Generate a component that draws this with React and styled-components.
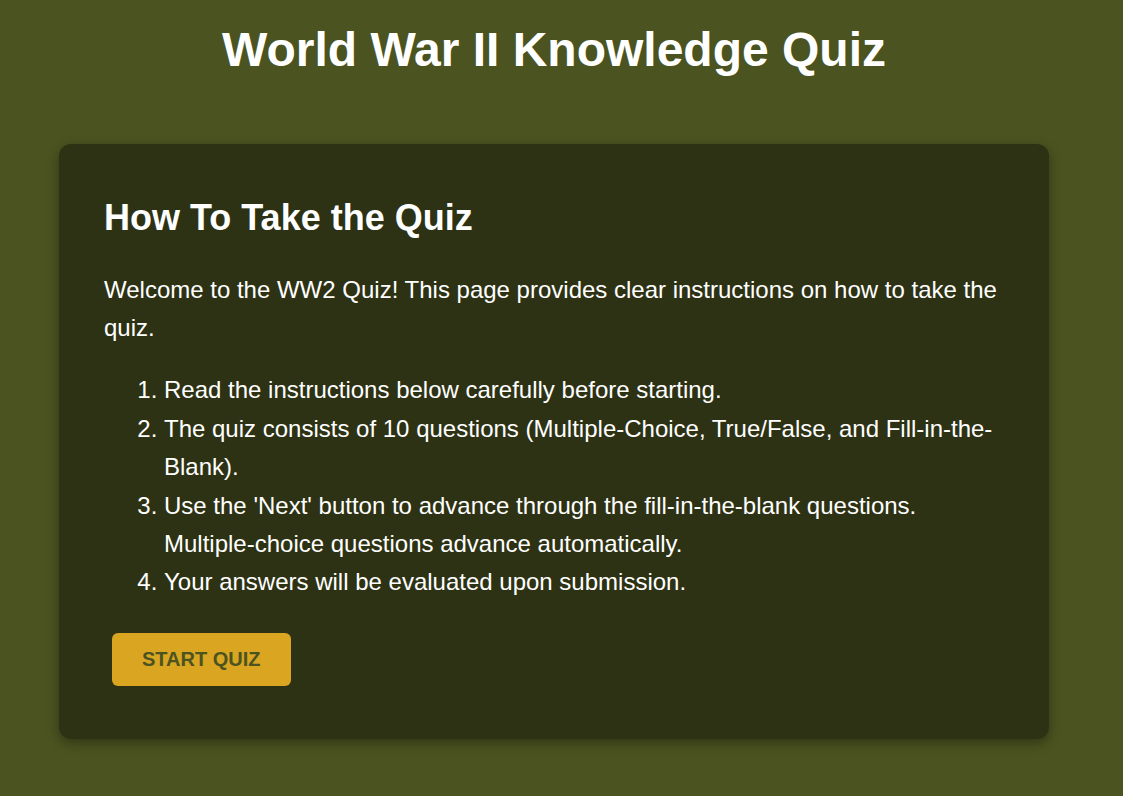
import React from "react";
import styled, { createGlobalStyle } from "styled-components";

const GlobalStyle = createGlobalStyle`
  html, body {
    margin: 0;
    padding: 0;
    background: #4b5320;
  }
  body {
    font-family: "Liberation Sans", Arial, Helvetica, sans-serif;
    color: #ffffff;
  }
`;

const Page = styled.div`
  min-height: 796px;
  box-sizing: border-box;
  padding: 22px 74px 40px 59px;
  background: #4b5320;
`;

const Title = styled.h1`
  margin: 0 0 67px;
  font-size: 48px;
  line-height: normal;
  font-weight: 700;
  text-align: center;
  color: #ffffff;
`;

const Card = styled.section`
  background: #2e3214;
  border-radius: 12px;
  padding: 45px;
  box-shadow: 0 4px 12px rgba(0, 0, 0, 0.35);
`;

const Heading = styled.h2`
  margin: 0 0 24px;
  font-size: 36px;
  line-height: 1.6;
  font-weight: 700;
  color: #ffffff;
`;

const Text = styled.p`
  margin: 0 0 24px;
  font-size: 24px;
  line-height: 1.6;
  color: #ffffff;
`;

const Steps = styled.ol`
  margin: 0 0 24px;
  padding-left: 60px;
  font-size: 24px;
  line-height: 1.6;
  color: #ffffff;
`;

const Step = styled.li``;

const StartButton = styled.button`
  margin: 7px 8px 8px;
  padding: 15px 30px;
  border: none;
  border-radius: 6px;
  background: #daa520;
  color: #4b5320;
  font-family: "Liberation Sans", Arial, sans-serif;
  font-size: 20px;
  line-height: normal;
  font-weight: 700;
  text-transform: uppercase;
  cursor: pointer;
`;

const steps = [
  "Read the instructions below carefully before starting.",
  "The quiz consists of 10 questions (Multiple-Choice, True/False, and Fill-in-the-Blank).",
  "Use the 'Next' button to advance through the fill-in-the-blank questions. Multiple-choice questions advance automatically.",
  "Your answers will be evaluated upon submission.",
];

export default function App() {
  return (
    <>
      <GlobalStyle />
      <Page>
        <Title>World War II Knowledge Quiz</Title>
        <Card>
          <Heading>How To Take the Quiz</Heading>
          <Text>
            Welcome to the WW2 Quiz! This page provides clear instructions on how to take the quiz.
          </Text>
          <Steps>
            {steps.map((s) => (
              <Step key={s}>{s}</Step>
            ))}
          </Steps>
          <StartButton>Start Quiz</StartButton>
        </Card>
      </Page>
    </>
  );
}
